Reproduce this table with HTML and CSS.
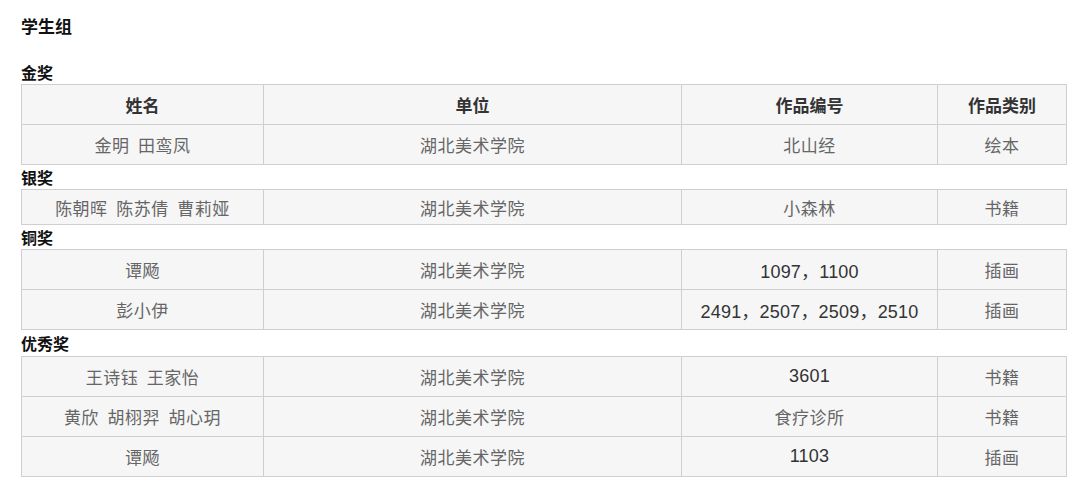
FILE: index.html
```html
<!DOCTYPE html>
<html lang="zh">
<head>
<meta charset="utf-8">
<link rel="stylesheet" href="styles.css">
</head>
<body>
<div class="page">
  <h1 class="title">学生组</h1>
  <div class="gap"></div>
  <h2 class="label">金奖</h2>
  <table class="grid">
    <colgroup><col class="c1"><col class="c2"><col class="c3"><col class="c4"></colgroup>
    <tr class="head"><th>姓名</th><th>单位</th><th>作品编号</th><th>作品类别</th></tr>
    <tr><td>金明&nbsp;&nbsp;田鸾凤</td><td>湖北美术学院</td><td>北山经</td><td>绘本</td></tr>
  </table>
  <h2 class="label">银奖</h2>
  <table class="grid short">
    <colgroup><col class="c1"><col class="c2"><col class="c3"><col class="c4"></colgroup>
    <tr><td>陈朝晖&nbsp;&nbsp;陈苏倩&nbsp;&nbsp;曹莉娅</td><td>湖北美术学院</td><td>小森林</td><td>书籍</td></tr>
  </table>
  <h2 class="label">铜奖</h2>
  <table class="grid">
    <colgroup><col class="c1"><col class="c2"><col class="c3"><col class="c4"></colgroup>
    <tr><td>谭飏</td><td>湖北美术学院</td><td class="num">1097，1100</td><td>插画</td></tr>
    <tr><td>彭小伊</td><td>湖北美术学院</td><td class="num">2491，2507，2509，2510</td><td>插画</td></tr>
  </table>
  <h2 class="label tall">优秀奖</h2>
  <table class="grid">
    <colgroup><col class="c1"><col class="c2"><col class="c3"><col class="c4"></colgroup>
    <tr><td>王诗钰&nbsp;&nbsp;王家怡</td><td>湖北美术学院</td><td class="num">3601</td><td>书籍</td></tr>
    <tr><td>黄欣&nbsp;&nbsp;胡栩羿&nbsp;&nbsp;胡心玥</td><td>湖北美术学院</td><td>食疗诊所</td><td>书籍</td></tr>
    <tr><td>谭飏</td><td>湖北美术学院</td><td class="num">1103</td><td>插画</td></tr>
  </table>
</div>
</body>
</html>
```
FILE: styles.css
```css
html, body {
  margin: 0;
  padding: 0;
  background: #ffffff;
}
body {
  font-family: "Noto Sans CJK SC", "Liberation Serif", serif;
  color: #555555;
}
.page {
  display: flex;
  flex-direction: column;
  padding: 14px 0 0 21px;
  width: 1045px;
}
.title {
  margin: 0;
  font-size: 17px;
  line-height: 24px;
  font-weight: 700;
  color: #111111;
}
.gap {
  height: 22px;
}
.label {
  margin: 0;
  font-size: 16px;
  line-height: 24px;
  height: 24px;
  font-weight: 700;
  color: #111111;
}
.label.tall {
  line-height: 26px;
  height: 26px;
}
.grid {
  width: 1045px;
  border-collapse: collapse;
  table-layout: fixed;
  background: #f6f6f7;
}
.c1 { width: 242px; }
.c2 { width: 418px; }
.c3 { width: 256px; }
.c4 { width: 129px; }
.grid td, .grid th {
  border: 1px solid #cfcfd2;
  height: 40px;
  padding: 0;
  text-align: center;
  font-size: 17px;
  box-sizing: border-box;
  font-weight: 400;
  color: #666666;
  letter-spacing: 0.5px;
}
.grid th {
  font-weight: 700;
  color: #333333;
  letter-spacing: 0;
}
.grid.short td {
  height: 35px;
}
.grid td.num {
  font-family: "Liberation Sans", "Noto Sans CJK SC", sans-serif;
  font-size: 18px;
  color: #333333;
  letter-spacing: 0.2px;
}
```
